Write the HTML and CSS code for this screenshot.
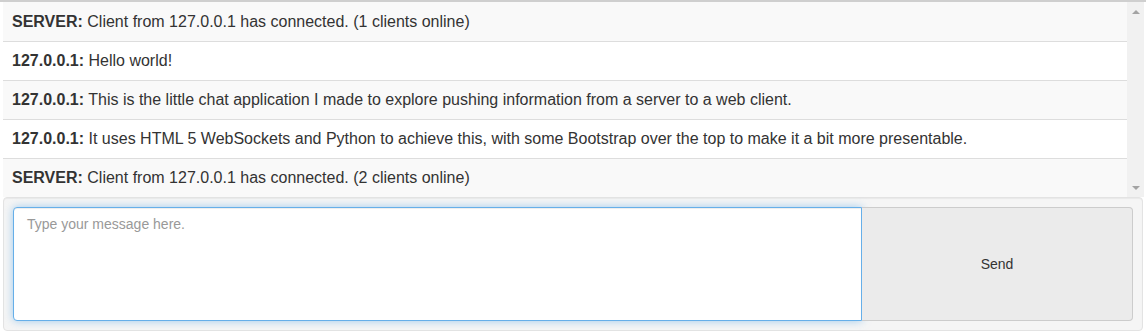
FILE: index.html
```html
<!DOCTYPE html>
<html lang="en">
    <head>
        <title>Little chat</title>
        <link rel="stylesheet" href="styles.css">
    </head>
    <body>
        <div id="chatContainer">
            <div id="messageBox">
                <div id="messageList">
                    <div class="message"><b>SERVER:</b> Client from 127.0.0.1 has connected. (1 clients online)</div>
                    <div class="message"><b>127.0.0.1:</b> Hello world!</div>
                    <div class="message"><b>127.0.0.1:</b> This is the little chat application I made to explore pushing information from a server to a web client.</div>
                    <div class="message"><b>127.0.0.1:</b> It uses HTML 5 WebSockets and Python to achieve this, with some Bootstrap over the top to make it a bit more presentable.</div>
                    <div class="message"><b>SERVER:</b> Client from 127.0.0.1 has connected. (2 clients online)</div>
                </div>
                <div class="scrollTrack">
                    <span class="arrowUp"></span>
                    <span class="arrowDown"></span>
                </div>
            </div>

            <div id="inputWell">
                <textarea id="messageInput" placeholder="Type your message here."></textarea>
                <button id="sendButton">Send</button>
            </div>
        </div>
    </body>
</html>
```

FILE: styles.css
```css
body{
    margin: 0;
    background-color: #fff;
    font-family: 'Liberation Sans', Arial, sans-serif;
    color: #333;
}

#chatContainer{
    border-top: 2px solid #cfcfcf;
}

#messageBox{
    display: flex;
    flex-direction: row;
    height: 195px;
    margin: 0 2px 0 3px;
}

#messageList{
    flex: 1;
}

.message{
    font-size: 16px;
    line-height: 22px;
    padding: 8px 9px;
    border-top: 1px solid #ddd;
    white-space: nowrap;
    overflow: hidden;
}

.message:nth-child(odd){
    background-color: #f9f9f9;
}

.message:first-child{
    border-top-color: #f9f9f9;
}

.scrollTrack{
    width: 17px;
    background-color: #f1f1f1;
    display: flex;
    flex-direction: column;
    justify-content: space-between;
    align-items: center;
    padding: 8px 0 7px 0;
}

.arrowUp{
    width: 0;
    height: 0;
    border-left: 4px solid transparent;
    border-right: 4px solid transparent;
    border-bottom: 4px solid #a3a3a3;
}

.arrowDown{
    width: 0;
    height: 0;
    border-left: 4px solid transparent;
    border-right: 4px solid transparent;
    border-top: 4px solid #a3a3a3;
}

#inputWell{
    display: flex;
    flex-direction: row;
    margin: 0 3px;
    padding: 9px;
    background-color: #f5f5f5;
    border: 1px solid #e3e3e3;
    border-radius: 4px;
    box-shadow: inset 0 1px 1px rgba(0, 0, 0, .05);
}

#messageInput{
    flex: 1;
    height: 114px;
    box-sizing: border-box;
    margin: 0;
    padding: 6px 13px;
    font-family: 'Liberation Sans', Arial, sans-serif;
    font-size: 14px;
    line-height: 20px;
    color: #555;
    background-color: #fff;
    border: 1px solid #66afe9;
    border-radius: 4px 0 0 4px;
    box-shadow: inset 0 1px 1px rgba(0, 0, 0, .075), 0 0 8px rgba(102, 175, 233, .6);
    resize: none;
    outline: none;
}

#messageInput::placeholder{
    color: #999;
}

#sendButton{
    width: 271px;
    height: 114px;
    margin: 0;
    font-family: 'Liberation Sans', Arial, sans-serif;
    font-size: 14px;
    color: #333;
    background-color: #ebebeb;
    border: 1px solid #ccc;
    border-left: none;
    border-radius: 0 4px 4px 0;
}
```
